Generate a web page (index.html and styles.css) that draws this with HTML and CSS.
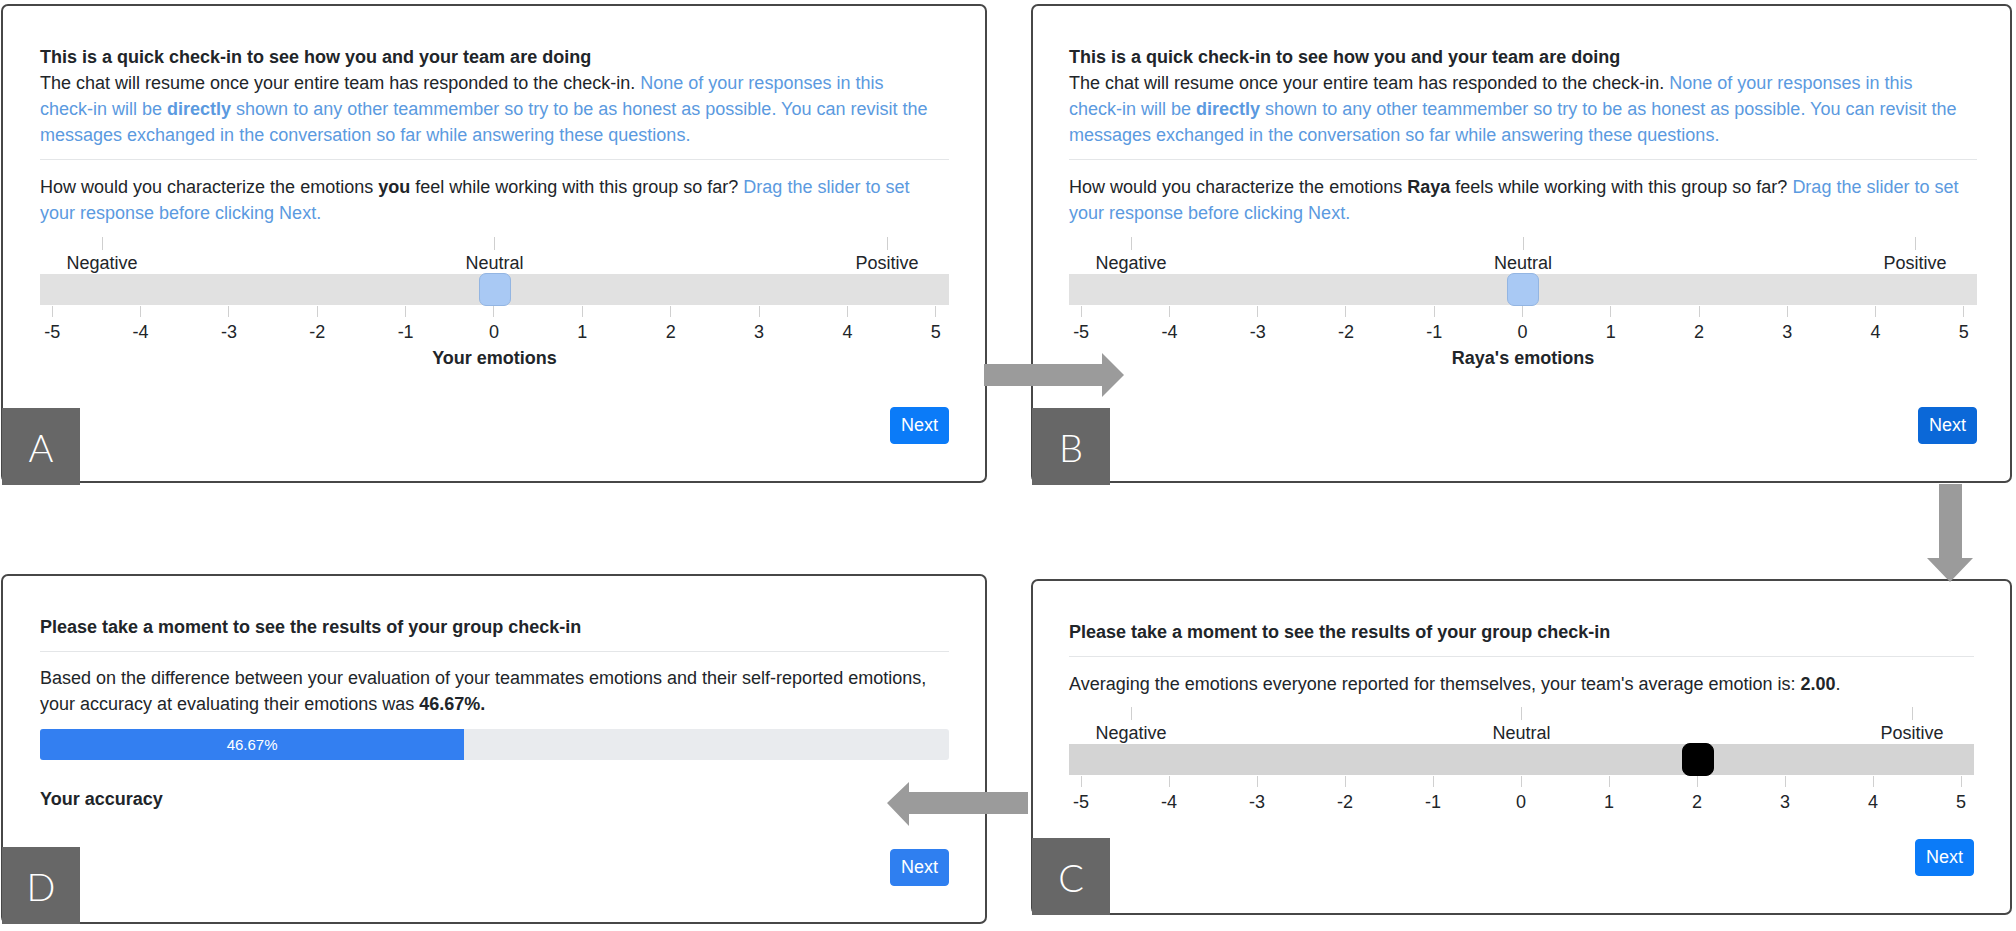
FILE: index.html
```html
<!DOCTYPE html>
<html lang="en">
<head>
<meta charset="utf-8">
<title>Check-in flow</title>
<link rel="stylesheet" href="styles.css">
</head>
<body>
<div class="board">

  <section class="panel panel-a">
    <h2 class="title">This is a quick check-in to see how you and your team are doing</h2>
    <p class="intro">The chat will resume once your entire team has responded to the check-in. <span class="hint">None of your responses in this <span class="nw">check-in</span> will be <b>directly</b> shown to any other teammember so try to be as honest as possible. You can revisit the messages exchanged in the conversation so far while answering these questions.</span></p>
    <hr class="rule">
    <p class="question">How would you characterize the emotions <b>you</b> feel while working with this group so far? <span class="hint">Drag the slider to set your response before clicking Next.</span></p>
    <div class="slider">
      <div class="marks"><span class="mark">Negative</span><span class="mark">Neutral</span><span class="mark">Positive</span></div>
      <div class="track"><span class="thumb" style="--pos:0.5"></span></div>
      <div class="scale"><span>-5</span><span>-4</span><span>-3</span><span>-2</span><span>-1</span><span>0</span><span>1</span><span>2</span><span>3</span><span>4</span><span>5</span></div>
      <div class="caption">Your emotions</div>
    </div>
    <div class="actions"><button class="btn">Next</button></div>
    <span class="tag">A</span>
  </section>

  <section class="panel panel-b">
    <h2 class="title">This is a quick check-in to see how you and your team are doing</h2>
    <p class="intro">The chat will resume once your entire team has responded to the check-in. <span class="hint">None of your responses in this <span class="nw">check-in</span> will be <b>directly</b> shown to any other teammember so try to be as honest as possible. You can revisit the messages exchanged in the conversation so far while answering these questions.</span></p>
    <hr class="rule">
    <p class="question">How would you characterize the emotions <b>Raya</b> feels while working with this group so far? <span class="hint">Drag the slider to set your response before clicking Next.</span></p>
    <div class="slider">
      <div class="marks"><span class="mark">Negative</span><span class="mark">Neutral</span><span class="mark">Positive</span></div>
      <div class="track"><span class="thumb" style="--pos:0.5"></span></div>
      <div class="scale"><span>-5</span><span>-4</span><span>-3</span><span>-2</span><span>-1</span><span>0</span><span>1</span><span>2</span><span>3</span><span>4</span><span>5</span></div>
      <div class="caption">Raya's emotions</div>
    </div>
    <div class="actions"><button class="btn btn-dark">Next</button></div>
    <span class="tag">B</span>
  </section>

  <section class="panel panel-d">
    <h2 class="title">Please take a moment to see the results of your group check-in</h2>
    <hr class="rule rule-tight">
    <p class="result">Based on the difference between your evaluation of your teammates emotions and their self-reported emotions, your accuracy at evaluating their emotions was <b>46.67%.</b></p>
    <div class="progress"><div class="progress-fill" style="width:46.67%">46.67%</div></div>
    <div class="accuracy">Your accuracy</div>
    <div class="actions"><button class="btn btn-soft">Next</button></div>
    <span class="tag">D</span>
  </section>

  <section class="panel panel-c">
    <h2 class="title">Please take a moment to see the results of your group check-in</h2>
    <hr class="rule rule-tight">
    <p class="result">Averaging the emotions everyone reported for themselves, your team's average emotion is: <b>2.00</b>.</p>
    <div class="slider slider-result">
      <div class="marks"><span class="mark">Negative</span><span class="mark">Neutral</span><span class="mark">Positive</span></div>
      <div class="track"><span class="thumb" style="--pos:0.7"></span></div>
      <div class="scale"><span>-5</span><span>-4</span><span>-3</span><span>-2</span><span>-1</span><span>0</span><span>1</span><span>2</span><span>3</span><span>4</span><span>5</span></div>
    </div>
    <div class="actions"><button class="btn">Next</button></div>
    <span class="tag">C</span>
  </section>

  <svg class="arrow arrow-right" width="142" height="46" viewBox="0 0 142 46" aria-hidden="true">
    <polygon points="0,11 118,11 118,0 140,22 118,44 118,33 0,33" fill="#9b9b9b"/>
  </svg>
  <svg class="arrow arrow-down" width="48" height="100" viewBox="0 0 48 100" aria-hidden="true">
    <polygon points="12,0 35,0 35,74 46,74 23,98 0,74 12,74" fill="#9b9b9b"/>
  </svg>
  <svg class="arrow arrow-left" width="142" height="46" viewBox="0 0 142 46" aria-hidden="true">
    <polygon points="141,10 22,10 22,0 0,21 22,44 22,32 141,32" fill="#9b9b9b"/>
  </svg>
</div>
</body>
</html>
```

FILE: styles.css
```css
* { box-sizing: border-box; }

html, body {
  margin: 0;
  padding: 0;
  background: #ffffff;
}

body {
  font-family: "Liberation Sans", Arial, Helvetica, sans-serif;
  font-size: 18px;
  line-height: 26px;
  color: #212529;
  width: 2016px;
  height: 931px;
  overflow: hidden;
}

.board {
  position: relative;
  display: grid;
  grid-template-columns: 986px 981px;
  column-gap: 44px;
  row-gap: 91px;
  align-items: start;
  padding: 4px 0 0 1px;
}

.panel {
  position: relative;
  border: 2px solid #474747;
  border-radius: 7px;
  padding: 38px 36px 37px 37px;
  background: #fff;
}

.panel-b { padding-right: 33px; padding-left: 36px; }
.panel-c { margin-top: 5px; padding-left: 36px; padding-right: 36px; padding-bottom: 37px; }
.panel-d { padding-bottom: 36px; }

.title {
  margin: 0;
  font-size: 18px;
  line-height: 26px;
  font-weight: 700;
}

.intro, .question, .result {
  margin: 0;
}

.nw { white-space: nowrap; }

.hint { color: #5b9ae0; }
.hint b { font-weight: 700; }

.rule {
  border: 0;
  height: 1px;
  background: #e4e6e8;
  margin: 11px 0 14px;
}

.rule-tight { margin: 11px 0 14px; }

.panel-d .rule { margin-bottom: 13px; }

/* slider */
.slider { margin-top: 11px; }
.slider-result { margin-top: 10px; }

.marks {
  display: flex;
  justify-content: space-between;
  padding: 0 2px 0 2px;
}

.mark {
  width: 120px;
  display: flex;
  flex-direction: column;
  align-items: center;
  line-height: 22px;
}

.mark::before {
  content: "";
  width: 1px;
  height: 13px;
  background: #cfcfcf;
  margin-bottom: 2px;
}

.track {
  position: relative;
  height: 31px;
  background: #e1e1e1;
}

.slider-result .track { background: #d4d4d4; }

.thumb {
  position: absolute;
  top: -1px;
  left: calc(12px + var(--pos) * (100% - 24px) - 16px);
  width: 32px;
  height: 33px;
  border-radius: 7px;
  background: #a9c9f4;
  border: 1px solid #93b5e2;
}

.slider-result .thumb {
  background: #000;
  border-color: #000;
  border-radius: 8px;
}

.scale {
  display: grid;
  grid-template-columns: repeat(11, 1fr);
  margin: 0 -31px 0 -32px;
}

.scale span {
  display: flex;
  flex-direction: column;
  align-items: center;
  line-height: 26px;
}

.scale span::before {
  content: "";
  width: 1px;
  height: 11px;
  background: #d0d0d0;
  margin: 1px 0 2px;
}

.caption {
  text-align: center;
  font-weight: 700;
  line-height: 26px;
}

/* buttons */
.actions {
  display: flex;
  justify-content: flex-end;
  margin-top: 36px;
}

.panel-c .actions { margin-top: 24px; }

.btn {
  font-family: inherit;
  font-size: 18px;
  line-height: 25px;
  padding: 5px 10px;
  color: #fff;
  background: #0b7bf8;
  border: 1px solid #0b7bf8;
  border-radius: 4px;
}

.btn-dark { background: #0b68d8; border-color: #0b68d8; }
.btn-soft { background: #2f7ff0; border-color: #2f7ff0; }

/* progress */
.progress {
  margin-top: 12px;
  height: 31px;
  background: #e9ebee;
  border-radius: 3px;
  overflow: hidden;
  display: flex;
}

.progress-fill {
  background: #337ff1;
  color: #fff;
  font-size: 15px;
  line-height: 31px;
  text-align: center;
}

.accuracy {
  margin-top: 26px;
  font-weight: 700;
}

.panel-d .actions { margin-top: 37px; }

/* step badges */
.tag {
  position: absolute;
  left: -1px;
  bottom: -4px;
  width: 78px;
  height: 77px;
  background: #676767;
  color: #fff;
  font-family: Lato, "Liberation Sans", sans-serif;
  font-weight: 300;
  font-size: 38px;
  display: flex;
  align-items: center;
  justify-content: center;
}

.panel-d .tag, .panel-c .tag { bottom: -2px; }

/* flow arrows */
.arrow { position: absolute; }
.arrow-right { left: 984px; top: 353px; }
.arrow-down { left: 1927px; top: 484px; }
.arrow-left { left: 887px; top: 782px; }
```
